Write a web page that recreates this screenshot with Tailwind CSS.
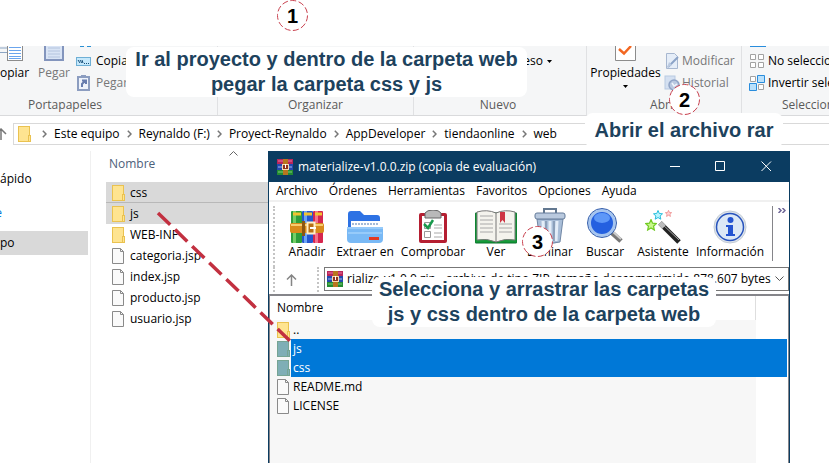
<!DOCTYPE html>
<html lang="es">
<head>
<meta charset="utf-8">
<title>Explorador y WinRAR</title>
<script src="https://cdn.jsdelivr.net/npm/@tailwindcss/browser@4"></script>
</head>
<body class="relative h-screen overflow-hidden bg-white font-['Open_Sans','Noto_Sans',sans-serif] text-xs text-black">

<!-- Shared symbols -->
<svg class="hidden" aria-hidden="true">
  <symbol id="folder" viewBox="0 0 13 16"><rect x=".5" y=".5" width="11" height="15" fill="#fee491" stroke="#eac250"/><rect x="10.500" y="9.500" width="2" height="6" fill="#fee491" stroke="#eac250"/></symbol>
  <symbol id="folder-sel" viewBox="0 0 13 16"><rect x=".5" y=".5" width="11" height="15" fill="#7faeb6" stroke="#75a493"/><rect x="10.500" y="9.500" width="2" height="6" fill="#7faeb6" stroke="#75a493"/></symbol>
  <symbol id="file" viewBox="0 0 13 16"><path d="M.5.5H8.500L11.500 3.500V15.500H.5Z" fill="#fafafa" stroke="#8a8a8a"/><path d="M8.500.5V3.500H11.500" fill="none" stroke="#8a8a8a"/></symbol>
  <symbol id="chev" viewBox="0 0 5 8"><path d="M.8.8 4 4 .8 7.200" fill="none" stroke="#777" stroke-width="1.500"/></symbol>
  <symbol id="ring" viewBox="0 0 31 31"><circle cx="15.500" cy="15.500" r="15" fill="#fff" stroke="#c8404e" stroke-dasharray="6 2.500"/></symbol>
  <symbol id="rar" viewBox="0 0 34 34">
    <rect x="1" y="1" width="11" height="32" rx="1" fill="#2e9d3c"/><rect x="3" y="1" width="3" height="32" fill="#74cf67"/>
    <rect x="12" y="1" width="11" height="32" rx="1" fill="#2457cf"/><rect x="14" y="1" width="3" height="32" fill="#6aa4f5"/>
    <rect x="23" y="1" width="10" height="32" rx="1" fill="#d6264e"/><rect x="25" y="1" width="3" height="32" fill="#f2718d"/>
    <path d="M3 4h8M14 4h8M25 4h7" stroke="#f2c230" stroke-width="3"/>
    <rect x="0" y="13" width="34" height="10" rx="2" fill="#d98b1c"/><path d="M1 15h32" stroke="#f7cd70" stroke-width="2"/>
    <rect x="12" y="11" width="3" height="15" fill="#8b5714"/><rect x="17.500" y="12.500" width="7" height="11" fill="#b96f14" stroke="#fff0c9" stroke-width="2"/><path d="M20 18h6" stroke="#fff" stroke-width="2"/>
  </symbol>
  <symbol id="rar-s" viewBox="0 0 16 16">
    <rect width="16" height="5" fill="#b9265a"/><rect y="5" width="16" height="6" fill="#2449ae"/><rect y="11" width="16" height="5" fill="#238b32"/>
    <path d="M1 2h5M11 2h4" stroke="#e875a2"/><path d="M1 8h4M12 8h3" stroke="#a3bdf2"/><path d="M1 13h5M11 13h4" stroke="#80ce77"/>
    <rect x="6" width="5" height="16" fill="#b8761f"/><rect x="5.500" y="5.500" width="6" height="5" fill="#8e3320" stroke="#f6ddb1"/><path d="M8.500 5v4" stroke="#fff"/>
  </symbol>
  <symbol id="star" viewBox="0 0 10 10"><path d="M5 .5 6.300 3.500 9.500 3.800 7.100 6 7.800 9.200 5 7.500 2.200 9.200 2.900 6 .5 3.800 3.700 3.500Z"/></symbol>
</svg>

<main>
  <!-- Ribbon -->
  <section class="mt-[46px] flex h-[70px] overflow-hidden border-b border-[#d9dadc] bg-[#f5f6f7] leading-4 whitespace-nowrap">
    <div class="relative flex w-[218px] shrink-0 flex-col justify-between border-r border-[#e0e1e3] pb-0.5">
      <div class="flex">
        <button class="flex w-7 flex-col items-start">
          <svg class="h-[15px] w-[23px]" viewBox="0 0 23 15"><path d="M0 6.500H7M0 2h7" stroke="#8ba5c4"/><rect x="7.500" y="-3.500" width="15" height="18" fill="#fff" stroke="#8c8c8c"/><path d="M9 1.500H21M9 4.500H21M9 7.500H21M9 10.500H21M9 12.500H21" stroke="#6ba5ed"/></svg>
          <span class="mt-1">opiar</span>
        </button>
        <button class="flex w-12 flex-col items-center pl-1 text-[#777]">
          <svg class="h-[15px] w-5" viewBox="0 0 20 15"><path d="M1 0V14H19V0" fill="#d9e4f5" stroke="#8395bd" stroke-width="2"/><path d="M4 2H16M4 5H16M4 8H16M4 11H16" stroke="#b4c4de"/></svg>
          <span class="mt-1">Pegar</span>
        </button>
        <div class="flex flex-col gap-1.5 pt-[7px]">
          <button class="flex items-center gap-[5px]"><svg class="h-[9px] w-[15px]" viewBox="0 0 15 9"><rect x=".5" y=".5" width="14" height="8" fill="#c5e8fb" stroke="#6eafd5"/><path d="M2 3l2 3M4 3l2 3M6 3l1 3" stroke="#174d77"/><path d="M8 6.500h5" stroke="#174d77" stroke-dasharray="1 1"/></svg>Copiar</button>
          <button class="flex items-center gap-[5px] text-[#777]"><svg class="h-4 w-[15px]" viewBox="0 0 15 16"><rect x="2" y="2" width="11" height="13" fill="#eef3fb" stroke="#8c9dc0" stroke-width="2"/><rect x="5" y="0" width="5" height="3" fill="#8c9dc0"/><path d="M6 12V9L9 6M6 5.500H10V9" fill="none" stroke="#667cae" stroke-width="2"/></svg>Pegar</button>
        </div>
      </div>
      <h2 class="pl-7 text-[#5a5a5a]">Portapapeles</h2>
      <svg class="absolute top-0 left-20 h-px w-3" viewBox="0 0 12 1"><path d="M0 0H4V1H0ZM7 0H11V1H7Z" fill="#2a90d3"/></svg>
    </div>
    <div class="flex w-[196px] shrink-0 flex-col justify-end border-r border-[#e0e1e3] pb-0.5 text-center text-[#5a5a5a]"><h2>Organizar</h2></div>
    <div class="flex w-[173px] shrink-0 flex-col justify-between border-r border-[#e0e1e3] pt-[7px] pb-0.5">
      <button class="flex items-center justify-end gap-1 pr-[34px]">eso<svg class="h-[3px] w-[5px]" viewBox="0 0 5 3"><path d="M0 0H5L2.500 3Z"/></svg></button>
      <h2 class="pr-1 text-center text-[#5a5a5a]">Nuevo</h2>
    </div>
    <div class="flex w-[155px] shrink-0 flex-col justify-between border-r border-[#e0e1e3] pb-0.5">
      <div class="flex">
        <button class="flex w-[77px] flex-col items-center">
          <svg class="h-[15px] w-[21px]" viewBox="0 0 21 15"><path d="M.5 0V14.500H20.500V0" fill="#fff" stroke="#8c8c8c"/><path d="M4 3 9 7.500 16 0" fill="none" stroke="#f26722" stroke-width="2.500"/></svg>
          <span class="mt-1">Propiedades</span>
          <svg class="mt-1 h-[3px] w-[5px]" viewBox="0 0 5 3"><path d="M0 0H5L2.500 3Z"/></svg>
        </button>
        <div class="flex flex-col gap-1.5 pt-[7px] text-[#777]">
          <button class="flex items-center gap-0.5"><svg class="h-4 w-4" viewBox="0 0 16 16"><path d="M2.500.5H10.500L13.500 3.500V15.500H2.500Z" fill="#e5edf8" stroke="#a7b7d0"/><path d="M4 14 14 4" stroke="#8ba2c7" stroke-width="2"/><path d="M5 9 3 15 8 12" fill="#bac9e0"/></svg>Modificar</button>
          <button class="flex items-center gap-0.5"><svg class="h-4 w-4" viewBox="0 0 16 16"><rect x="1" y="1" width="10" height="13" fill="#d4e0f1" stroke="#b8c9e2"/><circle cx="10" cy="10" r="5" fill="#b9c8e0" stroke="#8fa3c6" stroke-width="1.500"/><path d="M8 8 10 11 13 9" fill="none" stroke="#f0f5fc" stroke-width="1.500"/></svg>Historial</button>
        </div>
      </div>
      <h2 class="text-center text-[#5a5a5a]">Abrir</h2>
    </div>
    <div class="relative flex shrink-0 flex-col justify-between pb-0.5">
      <div class="flex flex-col items-start gap-1.5 pt-[7px] pl-[7px]">
        <button class="flex items-center gap-[3px]"><svg class="h-4 w-4" viewBox="0 0 16 16" fill="#fff" stroke="#a2a2a2"><path d="M1.500 1.500h5v5h-5zM9.500 1.500h5v5h-5zM1.500 9.500h5v5h-5zM9.500 9.500h5v5h-5z"/></svg>No seleccionar</button>
        <button class="flex items-center gap-[3px]"><svg class="h-4 w-4" viewBox="0 0 16 16" fill="#fff" stroke="#a2a2a2"><path d="M1.500 1.500h5v5h-5zM9.500 9.500h5v5h-5z"/><path d="M8.500.5h7v7h-7zM.5 8.500h7v7h-7z" fill="#b9e0fb" stroke="#298ddd"/></svg>Invertir selección</button>
      </div>
      <h2 class="pl-10 text-[#5a5a5a]">Seleccionar</h2>
      <span class="absolute top-0 left-2 h-px w-4 bg-[#298ddd]"></span>
    </div>
  </section>

  <!-- Address bar -->
  <nav class="flex h-[35px] items-center leading-4" aria-label="Ruta">
    <button class="w-[13px] shrink-0" aria-label="Subir"><svg class="h-3 w-2" viewBox="0 0 8 12"><path d="M1 1V12M-4 6 1 1 6 6" fill="none" stroke="#777" stroke-width="1.500"/></svg></button>
    <div class="flex h-[22px] grow items-center gap-[7px] border-y border-l border-[#d9d9d9] pl-1">
      <svg class="h-4 w-[13px]"><use href="#folder"/></svg>
      <svg class="ml-1 h-2 w-[5px]"><use href="#chev"/></svg>
      <a href="#">Este equipo</a><svg class="h-2 w-[5px]"><use href="#chev"/></svg>
      <a href="#">Reynaldo (F:)</a><svg class="h-2 w-[5px]"><use href="#chev"/></svg>
      <a href="#">Proyect-Reynaldo</a><svg class="h-2 w-[5px]"><use href="#chev"/></svg>
      <a href="#">AppDeveloper</a><svg class="h-2 w-[5px]"><use href="#chev"/></svg>
      <a href="#">tiendaonline</a><svg class="h-2 w-[5px]"><use href="#chev"/></svg>
      <a href="#">web</a>
    </div>
  </nav>

  <!-- Folder contents -->
  <div class="flex h-80 leading-4">
    <aside class="w-[91px] shrink-0 border-r border-[#f0f0f0] pt-5">
      <a href="#" class="block h-4">ápido</a>
      <a href="#" class="mt-4 flex h-5 w-0.5 items-center justify-end overflow-hidden text-[#0078d7]">e</a>
      <a href="#" class="mt-2 flex h-6 w-[88px] items-center bg-[#d9d9d9]">po</a>
    </aside>
    <section class="w-[177px] shrink-0 pl-[15px]">
      <div class="relative flex h-[31px] items-center pl-[3px] pb-1.5 text-[#4c607a]">Nombre
        <svg class="absolute top-0 left-[123px] h-[5px] w-[9px]" viewBox="0 0 9 5"><path d="M.5 4.500 4.500.5 8.500 4.500" fill="none" stroke="#666"/></svg>
      </div>
      <ul>
        <li class="flex h-[21px] items-center gap-[5px] bg-[#d9d9d9] pl-1.5"><svg class="h-4 w-[13px]"><use href="#folder"/></svg>css</li>
        <li class="flex h-[21px] items-center gap-[5px] bg-[#d9d9d9] pl-1.5 shadow-[0_-1px_0_#b8b8b8]"><svg class="h-4 w-[13px]"><use href="#folder"/></svg>js</li>
        <li class="flex h-[21px] items-center gap-[5px] pl-1.5"><svg class="h-4 w-[13px]"><use href="#folder"/></svg>WEB-INF</li>
        <li class="flex h-[21px] items-center gap-[5px] pl-1.5"><svg class="h-4 w-[13px]"><use href="#file"/></svg>categoria.jsp</li>
        <li class="flex h-[21px] items-center gap-[5px] pl-1.5"><svg class="h-4 w-[13px]"><use href="#file"/></svg>index.jsp</li>
        <li class="flex h-[21px] items-center gap-[5px] pl-1.5"><svg class="h-4 w-[13px]"><use href="#file"/></svg>producto.jsp</li>
        <li class="flex h-[21px] items-center gap-[5px] pl-1.5"><svg class="h-4 w-[13px]"><use href="#file"/></svg>usuario.jsp</li>
      </ul>
    </section>
  </div>
</main>

<!-- WinRAR window -->
<section class="absolute top-[151px] bottom-0 left-[268px] flex w-[522px] flex-col border-x border-[#0b3c61] bg-white leading-4 whitespace-nowrap">
  <header class="flex h-[31px] shrink-0 items-center bg-[#0b3c61] pl-2 text-white">
    <svg class="h-4 w-4"><use href="#rar-s"/></svg>
    <h1 class="ml-[5px] grow">materialize-v1.0.0.zip (copia de evaluación)</h1>
    <button class="flex w-[45px] justify-center" aria-label="Minimizar"><svg class="h-[11px] w-[11px]" viewBox="0 0 11 11"><path d="M0 5.500H10" stroke="#fff"/></svg></button>
    <button class="flex w-[45px] justify-center" aria-label="Maximizar"><svg class="h-[11px] w-[11px]" viewBox="0 0 11 11"><path d="M.5.5H9.500V9.500H.5Z" fill="none" stroke="#fff"/></svg></button>
    <button class="flex w-[46px] justify-center" aria-label="Cerrar"><svg class="h-[11px] w-[11px]" viewBox="0 0 11 11"><path d="M.5.5 10 10M10 .5.5 10" stroke="#fff"/></svg></button>
  </header>
  <nav class="flex h-5 shrink-0 items-center gap-[11px] border-b-2 border-[#f0f0f0] pl-[7px]">
    <button>Archivo</button><button>Órdenes</button><button>Herramientas</button><button>Favoritos</button><button>Opciones</button><button>Ayuda</button>
  </nav>
  <div class="flex h-[65px] shrink-0 pt-1">
    <span class="mr-[7px] ml-1 w-0 border-l-2 border-dotted border-[#c4c4c4]"></span>
    <button class="flex w-[50px] shrink-0 flex-col items-center"><svg class="mt-1 h-[34px] w-[34px]"><use href="#rar"/></svg>Añadir</button>
    <button class="flex w-[66px] shrink-0 flex-col items-center"><svg class="mt-1 h-[34px] w-9" viewBox="0 0 36 34"><path d="M1 4Q1 1 4 1H13L17 5H30Q33 5 33 8V20H1Z" fill="#2d72e4"/><rect x="4" y="11" width="29" height="12" fill="#fff"/><path d="M5 14H32" stroke="#a5bbd8" stroke-width="2" stroke-dasharray="2 1"/><path d="M0 17H36V29Q36 33 32 33H4Q0 33 0 29Z" fill="#79b9f5"/><path d="M0 18H36M1 23H35" stroke="#b6ddff"/><rect x="22" y="27" width="10" height="3" fill="#e23a22"/></svg>Extraer en</button>
    <button class="flex w-[70px] shrink-0 flex-col items-center"><svg class="mt-1 h-[34px] w-[30px]" viewBox="0 0 30 34"><rect x="1" y="3" width="28" height="30" rx="2" fill="#b51f32"/><rect x="4" y="6" width="22" height="24" fill="#fff"/><path d="M7 3Q9 0 15 0T23 3V8H7Z" fill="#b9b9b9" stroke="#666"/><path d="M6.500 12.500h6v6h-6zM6.500 21.500h6v6h-6z" fill="none" stroke="#999"/><path d="M6 14 10 18 15 10" fill="none" stroke="#19994c" stroke-width="2.500"/><path d="M16 15H24M16 18H24M16 23H24M16 27H24" stroke="#aaa"/></svg>Comprobar</button>
    <button class="flex w-14 shrink-0 flex-col items-center"><svg class="mt-1 h-[34px] w-[42px]" viewBox="0 0 42 34"><rect y="3" width="42" height="30" rx="1" fill="#159b39" stroke="#08702a"/><path d="M2 2Q12-1 21 3Q30-1 40 2V30Q30 28 21 32Q12 28 2 30Z" fill="#f4f3ed" stroke="#777"/><path d="M21 3V32" stroke="#777"/><path d="M5 6H18M5 10H18M5 14H18M5 18H18M5 22H18M24 14H37M24 18H37M24 22H37" stroke="#a8a8a8"/><path d="M25 2H30V13L27.500 10 25 13Z" fill="#ce3443"/></svg>Ver</button>
    <button class="flex w-[52px] shrink-0 flex-col items-center"><svg class="mt-0.5 h-9 w-8" viewBox="0 0 32 36"><path d="M10 5V1H22V5" fill="none" stroke="#637890" stroke-width="2"/><path d="M3 11H29L26 34Q16 37 6 34Z" fill="#a9bed8" stroke="#7187a5"/><path d="M9 13 10 33M16 13V34M23 13 22 33" stroke="#e4edf8" stroke-width="3"/><path d="M12 13V33M20 13V33" stroke="#6c809b"/><rect x="1" y="5" width="30" height="6" rx="2" fill="#b9c9de" stroke="#647b99"/></svg>Eliminar</button>
    <button class="flex w-[58px] shrink-0 flex-col items-center"><svg class="mt-0.5 h-9 w-9" viewBox="0 0 36 36"><path d="M24 24 34 33" stroke="#777" stroke-width="5"/><path d="M25 23 34 31" stroke="#ccc" stroke-width="2"/><circle cx="15" cy="15" r="12.500" fill="#2460e0" stroke="#a6c5ef" stroke-width="3"/><circle cx="15" cy="15" r="14.500" fill="none" stroke="#315cab"/><ellipse cx="15" cy="10" rx="8" ry="5" fill="#5e98f8"/></svg>Buscar</button>
    <button class="flex w-[58px] shrink-0 flex-col items-center"><svg class="mt-1 h-[34px] w-9" viewBox="0 0 36 34"><path d="M15 13 34 32" stroke="#222" stroke-width="5"/><path d="M15 12 34 30" stroke="#aaa"/><path d="M15 13 19 17" stroke="#bbb" stroke-width="5"/><use href="#star" x="0" y="9" width="12" height="12" fill="#c8f88b" stroke="#72cb24"/><use href="#star" x="8" y="0" width="10" height="10" fill="#b8f5ff" stroke="#27bddb"/><use href="#star" x="20" y="0" width="7" height="7" fill="#ffd2d2" stroke="#eb8383"/></svg>Asistente</button>
    <button class="flex w-[76px] shrink-0 flex-col items-center"><svg class="mt-1 h-[34px] w-[34px]" viewBox="0 0 34 34"><circle cx="17" cy="17" r="16" fill="#dfe5ec" stroke="#c2cbd5"/><circle cx="17" cy="17" r="13.500" fill="#dce8f6" stroke="#2854bd" stroke-width="1.500"/><circle cx="17.500" cy="10" r="3" fill="#2454d1"/><path d="M13 15H20V24H22V26H13V24H15V17H13Z" fill="#2454d1"/></svg>Información</button>
    <span class="mx-1 mb-1.5 w-px bg-[#85858a]"></span>
    <svg class="mt-0.5 ml-px h-[5px] w-2" viewBox="0 0 8 5"><path d="M.5 0 3 2.500.5 5M4.500 0 7 2.500 4.500 5" fill="none" stroke="#6d6596" stroke-width="1.500"/></svg>
  </div>
  <div class="flex h-[25px] shrink-0">
    <span class="ml-1 border-l-2 border-dotted border-[#c4c4c4]"></span>
    <button class="w-[31px] shrink-0 pl-[11px]" aria-label="Subir"><svg class="h-3 w-[11px]" viewBox="0 0 11 12"><path d="M5.500 1V12M1 5.500 5.500 1 10 5.500" fill="none" stroke="#858585" stroke-width="1.500"/></svg></button>
    <span class="mr-[5px] ml-[11px] border-l-2 border-dotted border-[#c4c4c4]"></span>
    <div class="relative flex h-6 grow items-center border border-[#777] bg-white pl-0.5">
      <svg class="h-4 w-4 shrink-0"><use href="#rar-s"/></svg>
      <select aria-label="Ruta del archivo" class="ml-1 h-5 w-0 grow appearance-none bg-white text-xs"><option>rialize-v1.0.0.zip - archivo de tipo ZIP, tamaño descomprimido 878.607 bytes</option></select>
      <svg class="pointer-events-none absolute top-2 right-1 h-[6px] w-[9px]" viewBox="0 0 9 6"><path d="M.5.5 4.500 4.500 8.500.5" fill="none" stroke="#555"/></svg>
    </div>
  </div>
  <div class="mt-0.5 flex grow flex-col border-x border-t-2 border-[#85858a]">
    <div class="mr-8 flex h-6 shrink-0 items-center border-r border-[#dedede] pl-[7px]">Nombre</div>
    <div class="grow bg-[linear-gradient(#f7f7f7,#f7f7f7)] bg-[length:calc(100%-32px)_100%] bg-no-repeat pl-[7px]">
      <div class="flex h-[19px] items-center gap-px"><svg class="h-4 w-[13px]"><use href="#folder"/></svg><span class="pl-0.5">..</span></div>
      <div class="flex h-[19px] items-center gap-px"><svg class="h-4 w-[13px]"><use href="#folder-sel"/></svg><span class="mr-px flex h-full grow items-center bg-[#0078d7] pl-0.5 text-white">js</span></div>
      <div class="flex h-[19px] items-center gap-px"><svg class="h-4 w-[13px]"><use href="#folder-sel"/></svg><span class="mr-px flex h-full grow items-center bg-[#0078d7] pl-0.5 text-white">css</span></div>
      <div class="flex h-[19px] items-center gap-px"><svg class="h-4 w-[13px]"><use href="#file"/></svg><span class="pl-0.5">README.md</span></div>
      <div class="flex h-[19px] items-center gap-px"><svg class="h-4 w-[13px]"><use href="#file"/></svg><span class="pl-0.5">LICENSE</span></div>
    </div>
  </div>
</section>

<!-- Tutorial annotations -->
<svg class="pointer-events-none absolute top-0 left-0 h-[463px] w-[400px]" viewBox="0 0 400 463"><path d="M158 213 291 342" stroke="#c23040" stroke-width="3.500" stroke-dasharray="17 6.800"/></svg>
<p class="absolute top-[47px] left-[126px] w-[401px] rounded-lg bg-white text-center font-['Liberation_Sans',Arial,sans-serif] text-xl leading-[25px] font-bold whitespace-nowrap text-[#1d425d]">Ir al proyecto y dentro de la carpeta web<br>pegar la carpeta css y js</p>
<p class="absolute top-[113px] left-[585px] w-[198px] rounded-lg bg-white py-[5px] text-center font-['Liberation_Sans',Arial,sans-serif] text-xl leading-[25px] font-bold whitespace-nowrap text-[#1d425d]">Abrir el archivo rar</p>
<p class="absolute top-[277px] left-[372px] w-[344px] rounded-lg bg-white text-center font-['Liberation_Sans',Arial,sans-serif] text-xl leading-[25px] font-bold whitespace-nowrap text-[#1d425d]">Selecciona y arrastrar las carpetas<br>js y css dentro de la carpeta web</p>
<div class="absolute top-0 left-[277px] grid h-[31px] w-[31px] place-items-center font-['Liberation_Sans',Arial,sans-serif] text-xl font-bold"><svg class="col-start-1 row-start-1 h-[31px] w-[31px]"><use href="#ring"/></svg><span class="z-10 col-start-1 row-start-1">1</span></div>
<div class="absolute top-[84px] left-[669px] grid h-[31px] w-[31px] place-items-center font-['Liberation_Sans',Arial,sans-serif] text-xl font-bold"><svg class="col-start-1 row-start-1 h-[31px] w-[31px]"><use href="#ring"/></svg><span class="z-10 col-start-1 row-start-1">2</span></div>
<div class="absolute top-[226px] left-[522px] grid h-[31px] w-[31px] place-items-center font-['Liberation_Sans',Arial,sans-serif] text-xl font-bold"><svg class="col-start-1 row-start-1 h-[31px] w-[31px]"><use href="#ring"/></svg><span class="z-10 col-start-1 row-start-1">3</span></div>
</body>
</html>
